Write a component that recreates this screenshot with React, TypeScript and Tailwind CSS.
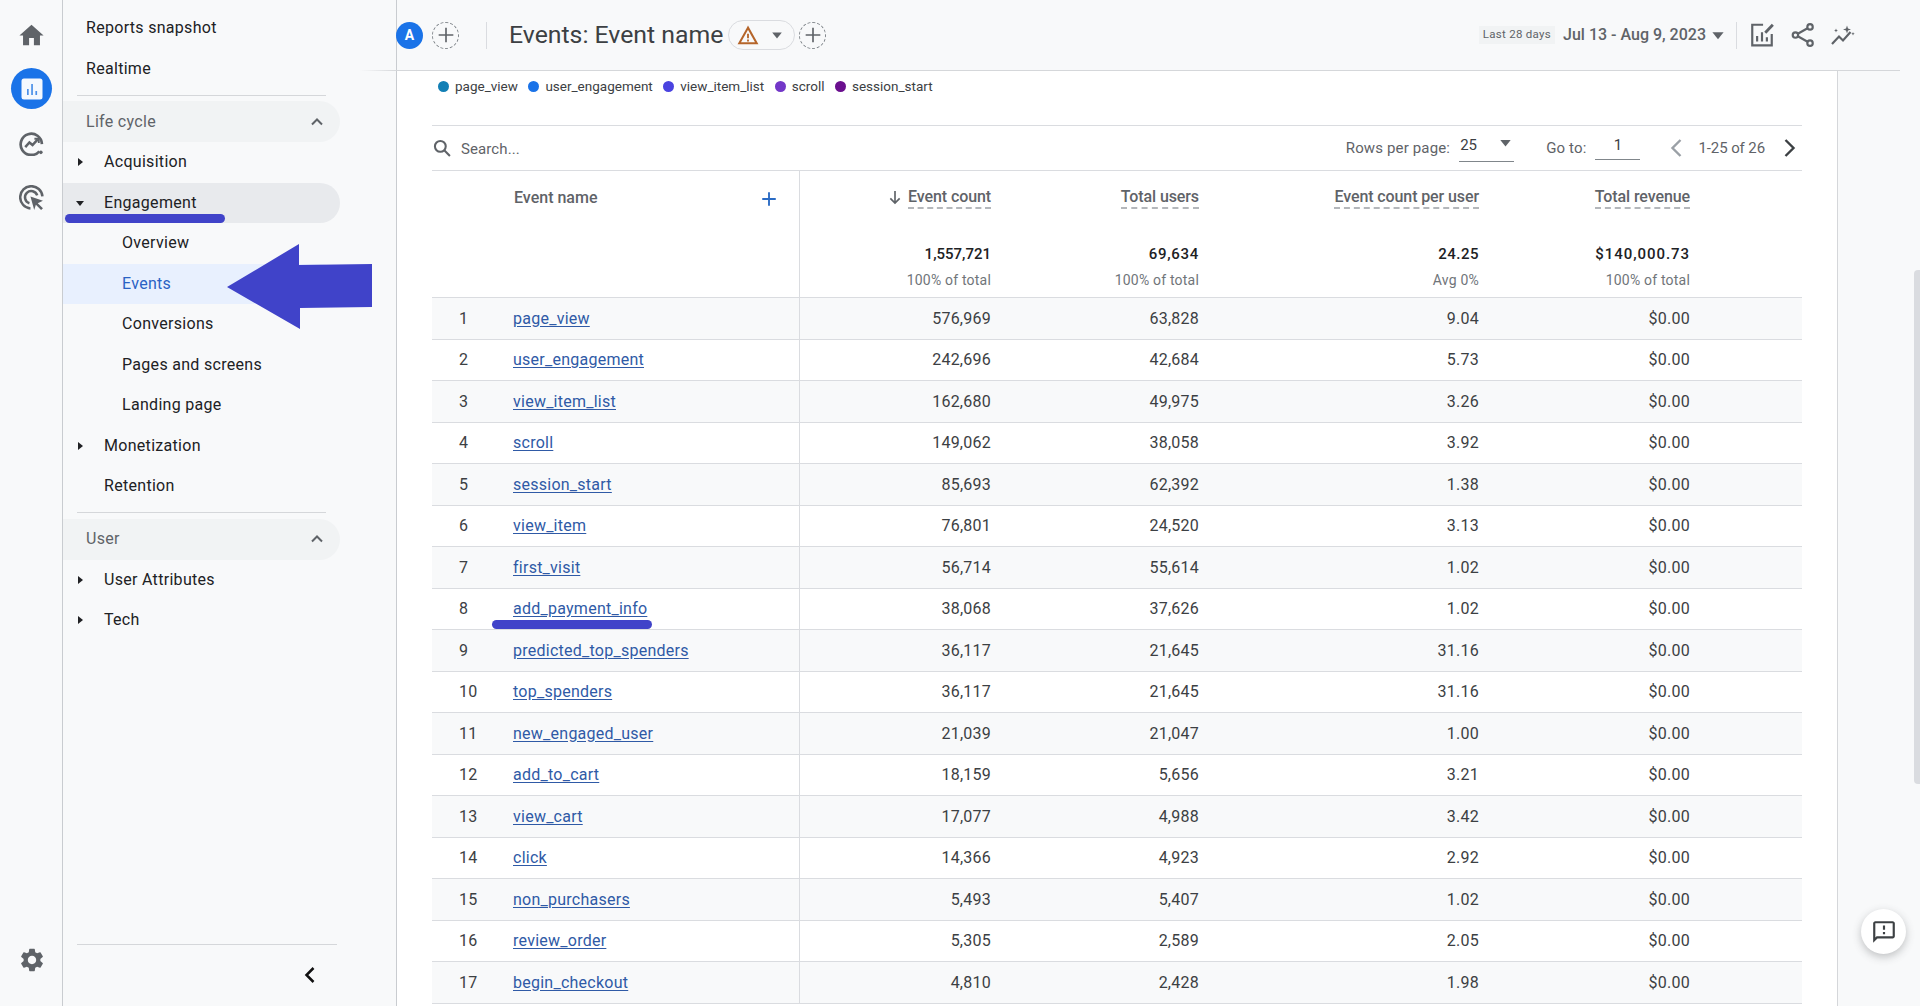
import React from 'react';

const rows = [
  ['page_view', '576,969', '63,828', '9.04'],
  ['user_engagement', '242,696', '42,684', '5.73'],
  ['view_item_list', '162,680', '49,975', '3.26'],
  ['scroll', '149,062', '38,058', '3.92'],
  ['session_start', '85,693', '62,392', '1.38'],
  ['view_item', '76,801', '24,520', '3.13'],
  ['first_visit', '56,714', '55,614', '1.02'],
  ['add_payment_info', '38,068', '37,626', '1.02'],
  ['predicted_top_spenders', '36,117', '21,645', '31.16'],
  ['top_spenders', '36,117', '21,645', '31.16'],
  ['new_engaged_user', '21,039', '21,047', '1.00'],
  ['add_to_cart', '18,159', '5,656', '3.21'],
  ['view_cart', '17,077', '4,988', '3.42'],
  ['click', '14,366', '4,923', '2.92'],
  ['non_purchasers', '5,493', '5,407', '1.02'],
  ['review_order', '5,305', '2,589', '2.05'],
  ['begin_checkout', '4,810', '2,428', '1.98'],
];

const legend = [
  ['page_view', 'bg-[#127fb5]'],
  ['user_engagement', 'bg-[#1a73e8]'],
  ['view_item_list', 'bg-[#4a43e0]'],
  ['scroll', 'bg-[#7337c8]'],
  ['session_start', 'bg-[#6a0f8e]'],
];

const columns = [
  { label: 'Event count', value: '1,557,721', sub: '100% of total', sorted: true, tracking: 'tracking-[0px]' },
  { label: 'Total users', value: '69,634', sub: '100% of total', sorted: false, tracking: 'tracking-[0.7px]' },
  { label: 'Event count per user', value: '24.25', sub: 'Avg 0%', sorted: false, tracking: 'tracking-[0.5px]' },
  { label: 'Total revenue', value: '$140,000.73', sub: '100% of total', sorted: false, tracking: 'tracking-[0.95px]' },
];

const GRID = 'grid grid-cols-[368px_191px_208px_280px_211px_112px]';

function Caret({ dir = 'down', className = '' }: { dir?: 'down' | 'right'; className?: string }) {
  return (
    <svg viewBox="0 0 10 10" className={className} fill="currentColor">
      {dir === 'down' ? <path d="M1 3h8L5 8z" /> : <path d="M3 1v8l5-4z" />}
    </svg>
  );
}

function NavRow({ label, indent = 'pl-[23px]', caret, pill = '', text = 'text-[#202124]' }: { label: string; indent?: string; caret?: 'down' | 'right'; pill?: string; text?: string }) {
  return (
    <div className={`h-[40.5px] w-[277px] flex items-center rounded-r-[21px] ${indent} ${pill}`}>
      {caret && <Caret dir={caret} className="w-[10px] h-[10px] text-[#202124] mr-[19px] ml-[-5px]" />}
      <span className={`text-[16px] tracking-[0.3px] ${text}`}>{label}</span>
    </div>
  );
}

function SectionRow({ label, open = true }: { label: string; open?: boolean }) {
  return (
    <div className="h-[41px] w-[277px] flex items-center justify-between rounded-r-[21px] bg-[#f1f3f4] pl-[23px] pr-[13px]">
      <span className="text-[16px] tracking-[0.3px] text-[#5f6368]">{label}</span>
      <svg viewBox="0 0 24 24" className={`w-[20px] h-[20px] ${open ? '' : 'rotate-180'}`} fill="none" stroke="#5f6368" strokeWidth="2.4">
        <path d="M6 15l6-6 6 6" />
      </svg>
    </div>
  );
}

function Rail() {
  return (
    <div className="w-[63px] h-full shrink-0 border-r border-[#c9ccd0] flex flex-col items-center pl-[1px] pt-[21px] pb-[32px]">
      <svg viewBox="0 0 24 24" className="w-[29px] h-[29px]" fill="#5f6368">
        <path d="M10 20v-6h4v6h5v-8h3L12 3 2 12h3v8z" />
      </svg>
      <div className="mt-[18px] w-[41px] h-[41px] rounded-full bg-[#1a73e8] flex items-center justify-center">
        <svg viewBox="0 0 22 22" className="w-[22px] h-[22px]">
          <rect x="0.5" y="0.5" width="21" height="21" rx="2.5" fill="#f4f8fe" />
          <rect x="6" y="11" width="1.7" height="6" fill="#4b8fe8" />
          <rect x="10.2" y="6" width="1.7" height="11" fill="#4b8fe8" />
          <rect x="14.4" y="13" width="1.7" height="4" fill="#4b8fe8" />
        </svg>
      </div>
      <svg viewBox="0 0 24 24" className="mt-[22px] w-[25px] h-[25px]" fill="none" stroke="#5f6368">
        <path d="M19.5 19.5A10.2 10.2 0 1 1 22 12.6" strokeWidth="2.6" />
        <path d="M6 15.5l4-4.5 3 2.5 5-5.5" strokeWidth="2.4" />
        <path d="M14.8 7.4h4.2v4.2" strokeWidth="1.8" />
        <circle cx="21" cy="20.5" r="1.7" fill="#5f6368" stroke="none" />
      </svg>
      <svg viewBox="0 0 24 24" className="mt-[29px] w-[25px] h-[25px]" fill="none" stroke="#5f6368" strokeWidth="2.4">
        <path d="M11 22.5A10.7 10.7 0 1 1 22.5 11" />
        <path d="M10 17.5A6 6 0 1 1 17.5 10" />
        <path d="M11 11l12 4-5 2.4 5 5-1.8 1.6-5-5L14.600 24z" fill="#5f6368" stroke="none" />
      </svg>
      <svg viewBox="0 0 24 24" className="mt-auto w-[28px] h-[28px]" fill="#5f6368">
        <path d="M19.14 12.94c.04-.3.06-.61.06-.94 0-.32-.02-.64-.07-.94l2.03-1.58c.18-.14.23-.41.12-.61l-1.92-3.32c-.12-.22-.37-.29-.59-.22l-2.39.96c-.5-.38-1.03-.7-1.62-.94l-.36-2.54c-.04-.24-.24-.41-.48-.41h-3.84c-.24 0-.43.17-.47.41l-.36 2.54c-.59.24-1.13.57-1.62.94l-2.39-.96c-.22-.08-.47 0-.59.22L2.74 8.87c-.12.21-.08.47.12.61l2.03 1.58c-.05.3-.09.63-.09.94s.02.64.07.94l-2.03 1.58c-.18.14-.23.41-.12.61l1.92 3.32c.12.22.37.29.59.22l2.39-.96c.5.38 1.03.7 1.62.94l.36 2.54c.05.24.24.41.48.41h3.84c.24 0 .44-.17.47-.41l.36-2.54c.59-.24 1.13-.56 1.62-.94l2.39.96c.22.08.47 0 .59-.22l1.92-3.32c.12-.22.07-.47-.12-.61l-2.01-1.58zM12 15.6c-1.98 0-3.6-1.62-3.6-3.6s1.62-3.6 3.6-3.6 3.6 1.62 3.6 3.6-1.62 3.6-3.6 3.6z" />
      </svg>
    </div>
  );
}

function Nav() {
  return (
    <div className="w-[334px] h-full shrink-0 border-r border-[#c9ccd0] pt-[8px] pb-[19px] flex flex-col">
      <NavRow label="Reports snapshot" />
      <NavRow label="Realtime" />
      <div className="ml-[14px] mr-[70px] mt-[6px] mb-[5px] border-t border-[#d5d7da]" />
      <SectionRow label="Life cycle" />
      <NavRow label="Acquisition" caret="right" indent="pl-[17px]" />
      <NavRow label="Engagement" caret="down" indent="pl-[17px]" pill="bg-[#e8eaed]" />
      <NavRow label="Overview" indent="pl-[59px]" />
      <NavRow label="Events" indent="pl-[59px]" pill="bg-[#e8f0fe]" text="text-[#2a62c4]" />
      <NavRow label="Conversions" indent="pl-[59px]" />
      <NavRow label="Pages and screens" indent="pl-[59px]" />
      <NavRow label="Landing page" indent="pl-[59px]" />
      <NavRow label="Monetization" caret="right" indent="pl-[17px]" />
      <NavRow label="Retention" indent="pl-[41px]" />
      <div className="ml-[14px] mr-[70px] mt-[5px] mb-[6px] border-t border-[#d5d7da]" />
      <SectionRow label="User" />
      <NavRow label="User Attributes" caret="right" indent="pl-[17px]" />
      <NavRow label="Tech" caret="right" indent="pl-[17px]" />
      <div className="mt-auto ml-[14px] mr-[59px] border-t border-[#d5d7da]" />
      <div className="w-[259px] flex justify-end pt-[18px]">
        <svg viewBox="0 0 24 24" className="w-[24px] h-[24px]" fill="none" stroke="#111" strokeWidth="2.5">
          <path d="M15.500 5l-7 7 7 7" />
        </svg>
      </div>
    </div>
  );
}

function DashedPlus() {
  return (
    <div className="w-[27px] h-[27px] rounded-full border border-dashed border-[#80868b] flex items-center justify-center">
      <svg viewBox="0 0 24 24" className="w-[22px] h-[22px]" fill="none" stroke="#5f6368" strokeWidth="1.8">
        <path d="M12 4v16M4 12h16" />
      </svg>
    </div>
  );
}

function Header() {
  return (
    <div className="h-[71px] w-[1503px] shrink-0 border-b border-[#d5d7da] flex items-center">
      <div className="ml-[-1px] flex items-center">
        <div className="w-[27px] h-[27px] rounded-full bg-[#1a73e8] flex items-center justify-center text-white text-[14px] font-bold">A</div>
        <div className="ml-[9px]"><DashedPlus /></div>
        <div className="ml-[27px] h-[27px] border-l border-[#dadce0]" />
        <span className="ml-[22px] text-[24.800px] text-[#3c4043] leading-none">Events: Event name</span>
        <div className="ml-[5px] w-[67px] h-[30px] rounded-full border border-[#dadce0] flex items-center pl-[8px]">
          <svg viewBox="0 0 24 24" className="w-[22px] h-[22px]" fill="none" stroke="#b5652a" strokeWidth="2.200">
            <path d="M12 4L2.500 21h19z" />
            <path d="M12 10.500v5M12 17v2" strokeWidth="2" />
          </svg>
          <Caret className="ml-[12px] w-[12px] h-[12px] text-[#5f6368]" />
        </div>
        <div className="ml-[4px]"><DashedPlus /></div>
      </div>
      <div className="ml-auto mr-[44px] flex items-center">
        <span className="bg-[#f1f3f4] text-[#5f6368] text-[11.500px] px-[4px] h-[18px] flex items-center tracking-[0.3px]">Last 28 days</span>
        <span className="ml-[8px] text-[16px] font-medium text-[#5f6368]">Jul 13 - Aug 9, 2023</span>
        <Caret className="ml-[5px] w-[14px] h-[14px] text-[#5f6368]" />
        <div className="ml-[11px] h-[27px] border-l border-[#dadce0]" />
        <svg viewBox="0 0 24 24" className="ml-[12px] w-[26px] h-[26px]" fill="none" stroke="#5f6368" strokeWidth="2">
          <path d="M13 2.500H3v19h18V11" />
          <path d="M7.500 18v-5M12 18V9.500M16.500 18v-4" />
          <path d="M15 10l7-7.500" strokeWidth="2.600" />
        </svg>
        <svg viewBox="0 0 24 24" className="ml-[15px] w-[26px] h-[26px]" fill="none" stroke="#5f6368" strokeWidth="2">
          <circle cx="18.500" cy="4.500" r="2.500" />
          <circle cx="5" cy="12" r="2.500" />
          <circle cx="18.500" cy="19.500" r="2.500" />
          <path d="M7.200 10.800l9-5M7.200 13.200l9 5" />
        </svg>
        <svg viewBox="0 0 26 24" className="ml-[14px] w-[26px] h-[26px]" fill="none" stroke="#5f6368" strokeWidth="2.200">
          <path d="M2 21l7-7.500 4 4 7.500-8.500" />
          <path d="M17 2.500l1 3 3 1-3 1-1 3-1-3-3-1 3-1zM6 5.500l.6 1.400 1.400.6-1.400.6-.6 1.400-.6-1.400-1.400-.6 1.400-.6zM23 9l.5 1.200 1.200.5-1.200.5-.5 1.200-.5-1.200-1.200-.5 1.200-.5z" fill="#5f6368" stroke="none" />
        </svg>
      </div>
    </div>
  );
}

function ColumnTitle({ label, sorted }: { label: string; sorted?: boolean }) {
  return (
    <div className="flex justify-end items-start pt-[15px]">
      {sorted && (
        <svg viewBox="0 0 24 24" className="w-[16px] h-[16px] mr-[5px] mt-[3px]" fill="none" stroke="#5f6368" strokeWidth="2.500">
          <path d="M12 3v18M5 14l7 7 7-7" />
        </svg>
      )}
      <span className="text-[16px] font-medium text-[#5f6368] tracking-[-0.1px] leading-[21px] border-b-2 border-dashed border-[#b4b7bb]">{label}</span>
    </div>
  );
}

function Total({ value, sub, tracking }: { value: string; sub: string; tracking: string }) {
  return (
    <div className="text-right">
      <div className={`text-[15px] font-medium text-[#202124] leading-[20px] ${tracking}`}>{value}</div>
      <div className="mt-[6px] text-[14px] text-[#70757a] tracking-[0.2px] leading-[20px]">{sub}</div>
    </div>
  );
}

function DataTable() {
  return (
    <div className="w-[1370px]">
      <div className="h-[46px] border-t border-b border-[#dadce0] flex items-center text-[15px] text-[#5f6368]">
        <svg viewBox="0 0 24 24" className="w-[20px] h-[20px]" fill="none" stroke="#5f6368" strokeWidth="2.500">
          <circle cx="10" cy="10" r="6.500" />
          <path d="M15 15l6.500 6.500" />
        </svg>
        <span className="ml-[9px] tracking-[0.1px] mt-[2px]">Search...</span>
        <span className="ml-auto tracking-[0.15px]">Rows per page:</span>
        <div className="ml-[9px] w-[55px] h-[27px] border-b border-[#80868b] flex justify-between items-start text-[#3c4043] pl-[1px]">
          <span className="mt-[-1px]">25</span>
          <Caret className="mt-[1px] mr-[2px] w-[13px] h-[13px] text-[#5f6368]" />
        </div>
        <span className="ml-[32px] tracking-[0.15px]">Go to:</span>
        <div className="ml-[9px] w-[45px] h-[24px] border-b border-[#80868b] text-center text-[#3c4043] leading-[18px]">1</div>
        <svg viewBox="0 0 24 24" className="ml-[25px] w-[24px] h-[24px]" fill="none" stroke="#9aa0a6" strokeWidth="2.400">
          <path d="M15.500 4l-8 8 8 8" />
        </svg>
        <span className="ml-[9px] tracking-[-0.1px] whitespace-nowrap">1-25 of 26</span>
        <svg viewBox="0 0 24 24" className="ml-[12px] mr-[1px] w-[24px] h-[24px]" fill="none" stroke="#3c4043" strokeWidth="2.400">
          <path d="M8.500 4l8 8-8 8" />
        </svg>
      </div>

      <div className={`${GRID} h-[127.300px] border-b border-[#dadce0]`}>
        <div className="border-r border-[#dadce0] pl-[82px] pr-[21px] pt-[16px] flex justify-between items-start">
          <span className="text-[16px] font-medium text-[#5f6368] leading-[21px]">Event name</span>
          <svg viewBox="0 0 24 24" className="w-[18px] h-[18px] mt-[3px]" fill="none" stroke="#2a6bc4" strokeWidth="2.500">
            <path d="M12 3v18M3 12h18" />
          </svg>
        </div>
        {columns.map((c) => (
          <div key={c.label} className="flex flex-col justify-between pb-[7px]">
            <ColumnTitle label={c.label} sorted={c.sorted} />
            <Total value={c.value} sub={c.sub} tracking={c.tracking} />
          </div>
        ))}
      </div>

      {rows.map(([name, count, users, perUser], i) => (
        <div key={name} className={`${GRID} h-[41.5px] items-center border-b border-[#dadce0] text-[16px] text-[#3c4043] tracking-[0.25px] ${i % 2 === 0 ? 'bg-[#f8f9fa]' : ''}`}>
          <div className="h-full flex items-center border-r border-[#dadce0]">
            <span className="w-[81px] pl-[27px]">{i + 1}</span>
            <span className="text-[#2f5aa6] underline underline-offset-2 tracking-[0.25px]">{name}</span>
          </div>
          <span className="text-right">{count}</span>
          <span className="text-right">{users}</span>
          <span className="text-right">{perUser}</span>
          <span className="text-right">$0.00</span>
        </div>
      ))}
    </div>
  );
}

export default function App() {
  return (
    <div className="relative w-[1920px] h-[1006px] overflow-hidden flex bg-[#f8f9fa] font-['Roboto',sans-serif]">
      <Rail />
      <Nav />
      <div className="flex-1 min-w-0 flex flex-col">
        <Header />
        <div className="w-[1441px] flex-1 min-h-0 bg-white border-r border-[#d5d7da] pl-[35px] overflow-hidden">
          <div className="h-[54px] pt-[5px] flex items-start gap-[10.500px]">
            {legend.map(([label, color]) => (
              <div key={label} className="flex items-center h-[20px] text-[13.500px] text-[#3c4043] ml-[6px] mr-[-6px]">
                <span className={`w-[11px] h-[11px] rounded-full mr-[6px] ${color}`} />
                {label}
              </div>
            ))}
          </div>
          <DataTable />
        </div>
      </div>

      {/* hand drawn marks on top of the screenshot */}
      <div className="absolute left-[65px] top-[214px] w-[160px] h-[9px] rounded-full bg-[#4043c9]" />
      <div className="absolute left-[492px] top-[620px] w-[160px] h-[9px] rounded-full bg-[#4043c9]" />
      <svg className="absolute left-[225px] top-[242px] w-[150px] h-[90px]" viewBox="225 242 150 90">
        <path d="M227 287L299 244V265L372 264V307L300 308V329Z" fill="#4043c9" />
      </svg>

      <div className="absolute left-[360px] top-[70px] w-[37px] h-px bg-gradient-to-r from-transparent to-[#d5d7da]" />
      <div className="absolute right-0 top-[270px] w-[6px] h-[514px] rounded-l bg-[#dadce0]" />
      <div className="absolute left-[1861px] top-[909px] w-[45px] h-[45px] rounded-full bg-white shadow-[0_3px_8px_rgba(60,64,67,0.3)] flex items-center justify-center">
        <svg viewBox="0 0 24 24" className="w-[26px] h-[26px]" fill="#3c4043">
          <path d="M20 2H4c-1.100 0-2 .9-2 2v18l4-4h14c1.100 0 2-.9 2-2V4c0-1.100-.9-2-2-2zm0 14H5.170L4 17.170V4h16v12zM11 12h2v2h-2zm0-6h2v4h-2z" />
        </svg>
      </div>
    </div>
  );
}
